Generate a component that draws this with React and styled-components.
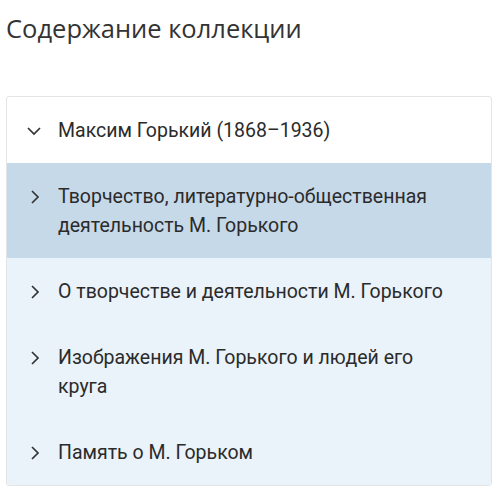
import React, { useState } from 'react';
import styled, { createGlobalStyle } from 'styled-components';

const Global = createGlobalStyle`
  body {
    margin: 0;
    background: #fff;
  }
`;

const items = [
  { id: 1, title: 'Творчество, литературно-общественная деятельность М. Горького' },
  { id: 2, title: 'О творчестве и деятельности М. Горького' },
  { id: 3, title: 'Изображения М. Горького и людей его круга' },
  { id: 4, title: 'Память о М. Горьком' },
];

const Chevron = ({ open }) => (
  <svg width="16" height="16" viewBox="0 0 16 16" fill="none">
    {open ? (
      <path d="M2 5 L8 11 L14 5" stroke="#333" strokeWidth="1.7" />
    ) : (
      <path d="M5 2 L11 8 L5 14" stroke="#333" strokeWidth="1.7" />
    )}
  </svg>
);

const App = () => {
  const [active, setActive] = useState(1);

  return (
    <>
      <Global />
      <Page>
        <Title>Содержание коллекции</Title>
        <Panel>
          <Row>
            <Icon $open><Chevron open /></Icon>
            <Label>Максим Горький (1868–1936)</Label>
          </Row>
          <List>
            {items.map((it) => (
              <Row key={it.id} $active={active === it.id} onClick={() => setActive(it.id)}>
                <Icon><Chevron /></Icon>
                <Label>{it.title}</Label>
              </Row>
            ))}
          </List>
        </Panel>
      </Page>
    </>
  );
};

export default App;

const Page = styled.div`
  padding: 10px 8px 0 6px;
`;

const Title = styled.h2`
  margin: 0 0 49px 0;
  font-family: 'Open Sans', sans-serif;
  font-weight: 400;
  font-size: 25.5px;
  line-height: 37px;
  color: #333;
`;

const Panel = styled.div`
  border: 1px solid #e2e4e6;
  border-radius: 3px;
  overflow: hidden;
  background: #fff;
`;

const List = styled.div`
  background: #eaf2fa;
`;

const Row = styled.div`
  display: flex;
  align-items: flex-start;
  padding: 19px 36px 18px 18px;
  background: ${(p) => (p.$active ? '#c6d9e9' : 'transparent')};
  cursor: pointer;
`;

const Icon = styled.span`
  flex: 0 0 auto;
  width: 33px;
  height: 29px;
  display: flex;
  align-items: center;
  padding-left: ${(p) => (p.$open ? '1px' : '2px')};
  box-sizing: border-box;
`;

const Label = styled.span`
  font-family: Roboto, 'Liberation Sans', sans-serif;
  font-size: 19.5px;
  line-height: 29px;
  color: #2b2b2b;
`;
